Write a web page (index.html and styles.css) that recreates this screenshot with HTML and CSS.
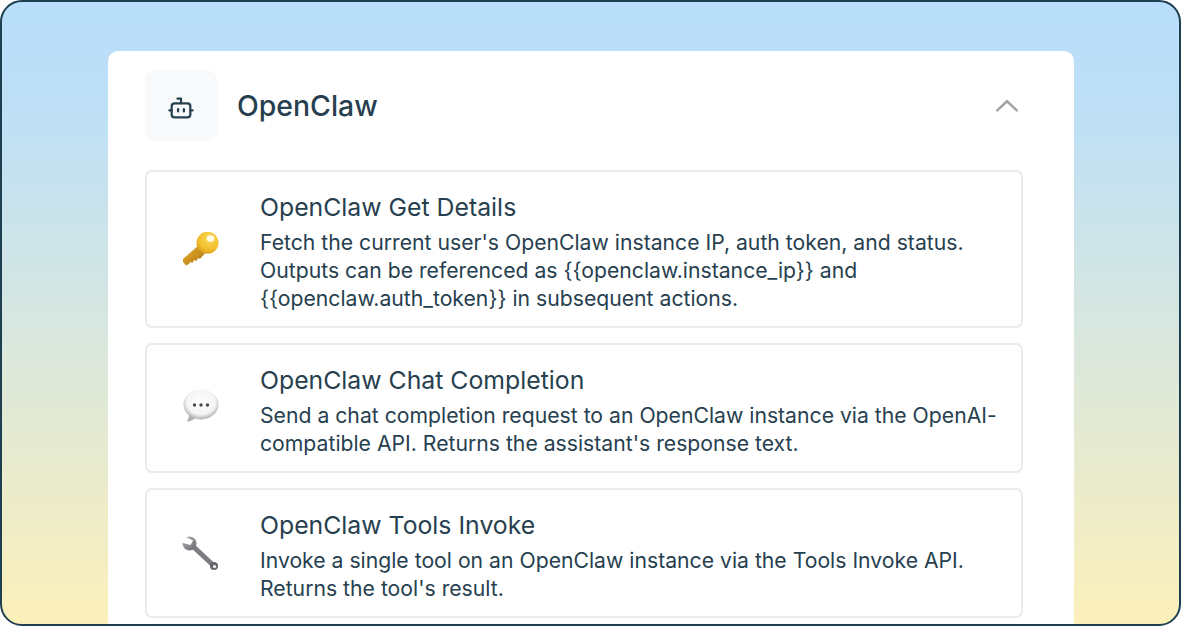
FILE: index.html
```html
<!DOCTYPE html>
<html lang="en">
<head>
  <meta charset="UTF-8" />
  <title>OpenClaw</title>
  <link rel="stylesheet" href="styles.css">
</head>
<body>

<div class="frame">
  <div class="panel">
    <div class="panel-header">
      <div class="panel-icon">
        <svg width="28" height="28" viewBox="0 0 24 24" fill="none" stroke="currentColor" stroke-width="1.900" stroke-linecap="round" stroke-linejoin="round">
          <path d="M12 8V4H9"/>
          <rect x="4" y="8" width="16" height="12" rx="2.500"/>
          <path d="M2 14h2"/>
          <path d="M20 14h2"/>
          <path d="M9.500 13v2"/>
          <path d="M14.500 13v2"/>
        </svg>
      </div>
      <h1 class="panel-title">OpenClaw</h1>
      <svg class="chevron" width="26" height="26" viewBox="0 0 24 24" fill="none" stroke="currentColor" stroke-width="2.400" stroke-linecap="round" stroke-linejoin="round">
        <path d="M3 17l9-8.500 9 8.500"/>
      </svg>
    </div>

    <div class="action-list">
      <div class="action-item">
        <div class="action-icon">
          <svg width="40" height="40" viewBox="0 0 40 40">
            <defs>
              <radialGradient id="keyHead" cx="0.6" cy="0.3" r="0.8">
                <stop offset="0" stop-color="#fbdb5c"/>
                <stop offset="0.65" stop-color="#f1bd2c"/>
                <stop offset="1" stop-color="#cf9416"/>
              </radialGradient>
              <linearGradient id="keyBlade" x1="0" y1="0" x2="1" y2="1">
                <stop offset="0" stop-color="#e8b02a"/>
                <stop offset="1" stop-color="#ad7414"/>
              </linearGradient>
            </defs>
            <path d="M18 15L2 29v3l3 3.500 3-1.500 1-2 2.500 1 1.500-3 2.500 1 1.500-3 2 1 7-8z" fill="url(#keyBlade)"/>
            <circle cx="26.500" cy="12.700" r="11" fill="url(#keyHead)"/>
            <ellipse cx="29.500" cy="8.500" rx="3.800" ry="3.200" fill="#fffbe6"/>
          </svg>
        </div>
        <div class="action-text">
          <h2>OpenClaw Get Details</h2>
          <p>Fetch the current user's OpenClaw instance IP, auth token, and status. Outputs can be referenced as {{openclaw.instance_ip}} and {{openclaw.auth_token}} in subsequent actions.</p>
        </div>
      </div>

      <div class="action-item">
        <div class="action-icon">
          <svg width="40" height="40" viewBox="0 0 40 40">
            <defs>
              <radialGradient id="bubble" cx="0.5" cy="0.42" r="0.6">
                <stop offset="0" stop-color="#ffffff"/>
                <stop offset="0.68" stop-color="#f4f4f4"/>
                <stop offset="1" stop-color="#a9a9a9"/>
              </radialGradient>
            </defs>
            <path d="M8 26c-.2 2.500-1 5-2.200 6.500 3.500.2 7-1.500 9-4.500z" fill="#b0b0b0"/>
            <ellipse cx="20" cy="15.500" rx="17.500" ry="15" fill="url(#bubble)"/>
            <circle cx="13.500" cy="16" r="1.700" fill="#4a4a4a"/>
            <circle cx="20" cy="16" r="1.700" fill="#4a4a4a"/>
            <circle cx="26.500" cy="16" r="1.700" fill="#4a4a4a"/>
          </svg>
        </div>
        <div class="action-text">
          <h2>OpenClaw Chat Completion</h2>
          <p>Send a chat completion request to an OpenClaw instance via the OpenAI-compatible API. Returns the assistant's response text.</p>
        </div>
      </div>

      <div class="action-item">
        <div class="action-icon">
          <svg width="40" height="40" viewBox="0 0 40 40">
            <defs>
              <linearGradient id="wrench" x1="0" y1="0" x2="1" y2="1">
                <stop offset="0" stop-color="#b4b4b8"/>
                <stop offset="1" stop-color="#6a666c"/>
              </linearGradient>
            </defs>
            <path d="M8.500 9L33 32" stroke="#7f7c82" stroke-width="5" fill="none"/>
            <circle cx="8.500" cy="9.500" r="7" fill="url(#wrench)"/>
            <path d="M0 8.500L4 2.500l8 4-2.500 4.500z" fill="#fff"/>
            <circle cx="33" cy="32" r="4" fill="#6a666c"/>
            <circle cx="33.500" cy="32.500" r="1.500" fill="#fff"/>
          </svg>
        </div>
        <div class="action-text">
          <h2>OpenClaw Tools Invoke</h2>
          <p>Invoke a single tool on an OpenClaw instance via the Tools Invoke API. Returns the tool's result.</p>
        </div>
      </div>
    </div>
  </div>
</div>

</body>
</html>
```

FILE: styles.css
```css
* {
  box-sizing: border-box;
}

html, body {
  margin: 0;
  height: 100%;
  background: #fff;
}

body {
  font-family: Inter, "Liberation Sans", sans-serif;
  color: #27404f;
  overflow: hidden;
}

.frame {
  height: 626px;
  padding: 49px 105px 0 106px;
  border: 2px solid #1e3f50;
  border-radius: 22px;
  background: linear-gradient(180deg, #b8defb 0%, #bfe0f5 20%, #d9e7dd 55%, #fcf0ba 100%);
  overflow: hidden;
}

.panel {
  height: 100%;
  padding: 19px 51px 0 37px;
  background: #fff;
  border-radius: 10px 10px 0 0;
}

.panel-header {
  display: flex;
  align-items: center;
  gap: 20px;
  margin-bottom: 29px;
}

.panel-icon {
  width: 72px;
  height: 71px;
  display: flex;
  align-items: center;
  justify-content: center;
  padding-top: 4px;
  background: #f7f9fb;
  border-radius: 10px;
}

.panel-title {
  flex: 1;
  margin: 0;
  font-size: 28.400px;
  font-weight: 500;
  color: #27404f;
}

.chevron {
  color: #a3a6a8;
  margin-right: 3px;
  margin-bottom: 2px;
}

.action-list {
  display: flex;
  flex-direction: column;
  gap: 15.500px;
}

.action-item {
  display: flex;
  align-items: center;
  padding: 20px 14px 14px 34px;
  background: #fff;
  border: 2px solid #e9ebed;
  border-radius: 7px;
}

.action-icon {
  flex: 0 0 40px;
  height: 40px;
  margin-right: 39px;
  margin-bottom: 3px;
}

.action-text h2 {
  margin: 0 0 5.500px;
  font-size: 24.800px;
  line-height: 30px;
  font-weight: 400;
  color: #27404f;
}

.action-text p {
  margin: 0;
  font-size: 21.200px;
  line-height: 28px;
  color: #27404f;
}
```
